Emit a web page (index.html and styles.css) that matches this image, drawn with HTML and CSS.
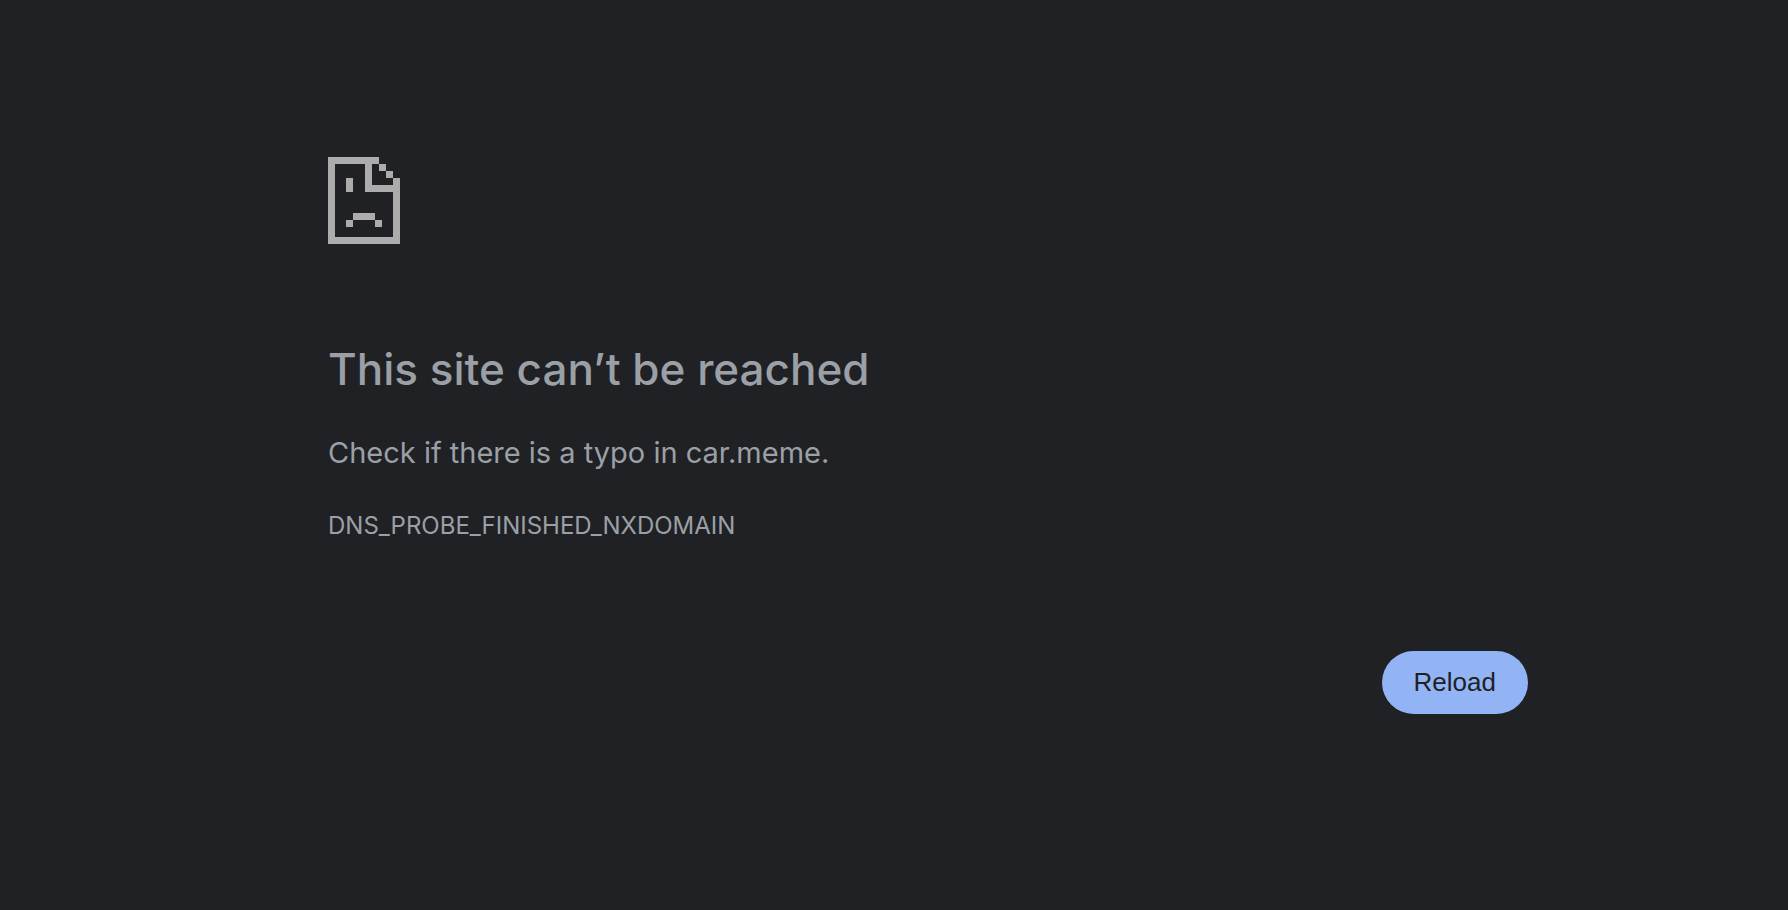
FILE: index.html
```html
<!DOCTYPE html>
<html lang="en">
<head>
  <meta charset="UTF-8">
  <meta name="viewport" content="width=device-width, initial-scale=1.0">
  <title>car.meme</title>
  <link rel="stylesheet" href="styles.css">
</head>
<body>
  <main class="wrapper">
    <!-- Sad page icon -->
    <svg class="icon" viewBox="0 0 72 87" shape-rendering="crispEdges" aria-hidden="true">
      <path d="M0 0h51v7H7v73h58V35H37V7h7v21h21v-7h7v66H0z"/>
      <path d="M51 7h7v7h-7zM58 14h7v7h-7z"/>
      <path d="M18 21h7v14h-7z"/>
      <path d="M25 56h22v7H25zM18 63h7v7h-7zM47 63h7v7h-7z"/>
    </svg>

    <h1>This site can’t be reached</h1>
    <p class="summary">Check if there is a typo in car.meme.</p>
    <p class="error-code">DNS_PROBE_FINISHED_NXDOMAIN</p>

    <div class="buttons">
      <button class="btn" id="reload" type="button" onclick="location.reload()">Reload</button>
    </div>
  </main>
</body>
</html>
```
FILE: styles.css
```css
:root {
  --bg-color: #202124;
  --text-color: #9aa0a6;
  --icon-color: #acacac;
  --button-color: #92b4f4;
}
* { box-sizing: border-box; margin: 0; padding: 0; }
body { background-color: var(--bg-color); color: var(--text-color); font-family: Inter, sans-serif; padding-left: 68px; }
.wrapper { max-width: 1200px; margin: 0 auto; padding-top: 157px; }
.icon { display: block; width: 72px; height: 87px; fill: var(--icon-color); }
h1 { margin-top: 97px; font-size: 44px; font-weight: 500; line-height: 56px; }
.summary { margin-top: 36px; font-size: 29px; line-height: 40px; }
.error-code { margin-top: 35px; font-size: 24px; line-height: 36px; }
.buttons { display: flex; justify-content: flex-end; margin-top: 107px; }
.btn { background-color: var(--button-color); color: var(--bg-color); border: none; border-radius: 32px; padding: 16px 32px; font-family: "Liberation Sans", Arial, sans-serif; font-size: 26px; line-height: 31px; cursor: pointer; }
.btn:hover { background-color: #a3c0f6; }
```
